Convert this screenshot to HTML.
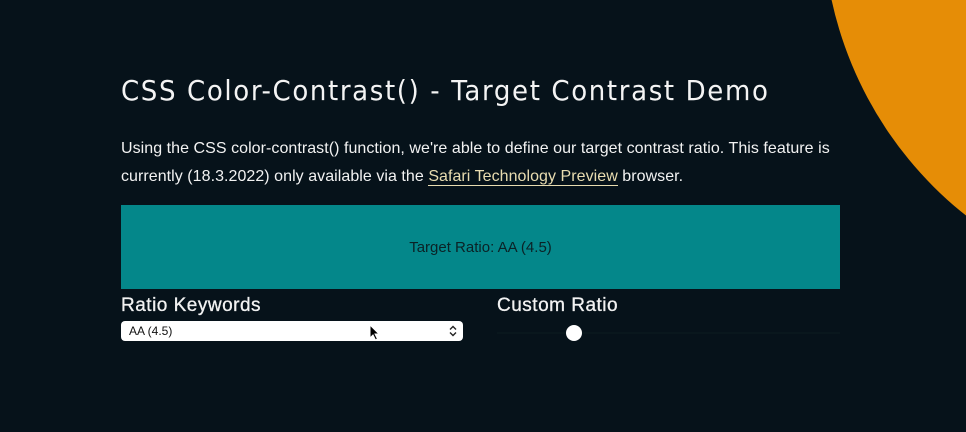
<!DOCTYPE html>
<html><head><style>
html,body{margin:0;padding:0;}
body{width:966px;height:432px;background:#06121a;position:relative;overflow:hidden;font-family:"Liberation Sans",sans-serif;}
.circ{position:absolute;left:823px;top:-457px;width:754px;height:754px;border-radius:50%;background:#e68d06;}
h1{position:absolute;left:121px;top:74px;margin:0;font-weight:400;font-size:28px;letter-spacing:1.75px;color:#f4f4f4;font-family:"DejaVu Sans",sans-serif;transform:scaleX(0.93);transform-origin:left;}
p{position:absolute;left:121px;top:135px;margin:0;width:740px;font-size:16px;line-height:28px;color:#f2f2f2;letter-spacing:0.05px;}
p a{color:#e8dcb0;text-decoration:none;border-bottom:1px solid #e8dcb0;}
.box{position:absolute;left:121px;top:205px;width:719px;height:84px;background:#04878a;color:#0b2226;font-size:15px;display:flex;align-items:center;justify-content:center;}
.lbl{position:absolute;top:295px;font-size:19px;color:#f2f2f2;letter-spacing:.5px;-webkit-text-stroke:0.3px #f2f2f2;}
.sel{position:absolute;left:121px;top:321px;width:342px;height:20px;background:#fff;border-radius:4px;font-size:12px;color:#111;line-height:20px;}
.sel span{position:absolute;left:8px;}
.track{position:absolute;left:497px;top:332px;width:343px;height:2px;background:#09171d;}
.thumb{position:absolute;left:566px;top:325px;width:16px;height:16px;border-radius:50%;background:#fff;}
</style></head><body>
<div class="circ"></div>
<h1>CSS Color-Contrast() - Target Contrast Demo</h1>
<p>Using the CSS color-contrast() function, we're able to define our target contrast ratio. This feature is currently (18.3.2022) only available via the <a>Safari Technology Preview</a> browser.</p>
<div class="box">Target Ratio: AA (4.5)</div>
<div class="lbl" style="left:121px">Ratio Keywords</div>
<div class="lbl" style="left:497px">Custom Ratio</div>
<div class="sel"><span>AA (4.5)</span><svg style="position:absolute;right:6px;top:4px" width="8" height="12" viewBox="0 0 8 12"><path d="M1 4.5 L4 1.5 L7 4.5 M1 7.5 L4 10.5 L7 7.5" fill="none" stroke="#222" stroke-width="1.4"/></svg></div>
<div class="track"></div><div class="thumb"></div>
<svg style="position:absolute;left:369px;top:324px" width="12" height="18" viewBox="0 0 12 18"><path d="M1 1 L1 14 L4 11 L6.5 16 L8.5 15 L6 10 L10 10 Z" fill="#000" stroke="#fff" stroke-width="1"/></svg>
</body></html>
